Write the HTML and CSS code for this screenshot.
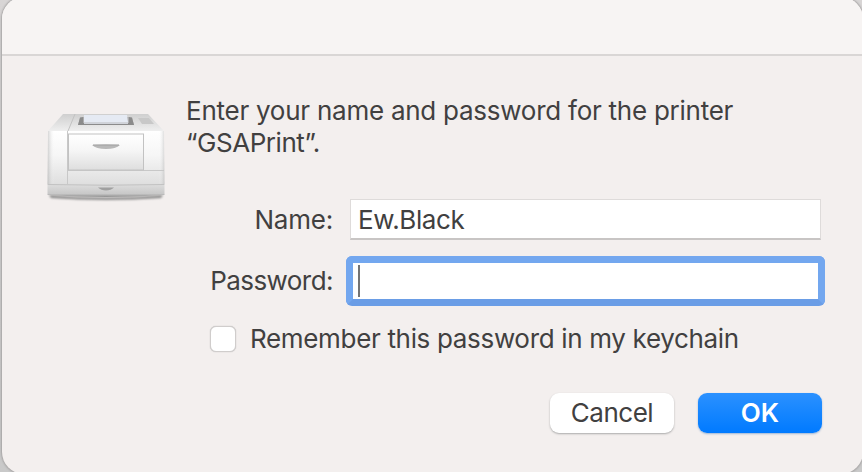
FILE: index.html
```html
<!DOCTYPE html>
<html lang="en">
<head>
<meta charset="utf-8">
<title>Printer sign in</title>
<link rel="stylesheet" href="styles.css">
</head>
<body>
<main class="dialog">
  <header class="titlebar"></header>
  <form class="content">
    <svg class="printer" viewBox="0 0 120 94" aria-hidden="true">
      <defs>
        <linearGradient id="top" x1="0" y1="0" x2="0" y2="1"><stop offset="0" stop-color="#cfcfcf"/><stop offset="1" stop-color="#efefef"/></linearGradient>
        <linearGradient id="front" x1="0" y1="0" x2="0" y2="1"><stop offset="0" stop-color="#fff"/><stop offset=".45" stop-color="#f6f6f6"/><stop offset="1" stop-color="#dedede"/></linearGradient>
        <linearGradient id="side" x1="0" y1="0" x2="1" y2="0"><stop offset="0" stop-color="#aaa" stop-opacity=".55"/><stop offset=".06" stop-color="#fff" stop-opacity="0"/><stop offset=".95" stop-color="#fff" stop-opacity="0"/><stop offset="1" stop-color="#aaa" stop-opacity=".45"/></linearGradient>
        <linearGradient id="base" x1="0" y1="0" x2="0" y2="1"><stop offset="0" stop-color="#dedede"/><stop offset=".75" stop-color="#c8c8c8"/><stop offset="1" stop-color="#8f8f8f"/></linearGradient>
        <filter id="soft" x="-10%" y="-100%" width="120%" height="300%"><feGaussianBlur stdDeviation="1"/></filter>
      </defs>
      <path d="M3 83Q60 88 117 83L115 86Q60 90 5 86Z" fill="#888" filter="url(#soft)"/>
      <path d="M17 2H102L118 19H2Z" fill="url(#top)"/>
      <path d="M29 2L22 19" stroke="#c2c2c2" stroke-width="1"/>
      <path d="M34 5H86L88 13H32Z" fill="#adadae"/>
      <path d="M34 6L37 5V11H83V5L86 6L88 13H32Z" fill="#8b8b8b"/>
      <path d="M38 3H81L82 10H38Z" fill="#e5eaf3"/>
      <path d="M38 10H82V12H38Z" fill="#d0d3d9"/>
      <path d="M92 6H103L108 12H96Z" fill="#c8c8c8"/>
      <path d="M2 19H118L118.500 73H1.500Z" fill="url(#front)"/>
      <path d="M2 19H118L118.500 73H1.500Z" fill="url(#side)"/>
      <path d="M21.500 19V73M21.500 58.500H118" fill="none" stroke="#c8c8c8"/>
      <rect x="22.500" y="22" width="75" height="36" fill="url(#front)" stroke="#c2c2c2"/>
      <path d="M46 33Q60 32 74 33Q70 37 60 37Q50 37 46 33Z" fill="#b8b8b8"/>
      <path d="M47 33H73" stroke="#a0a0a0"/>
      <path d="M1.500 72H118.500V83Q60 87 1.500 83Z" fill="url(#base)"/>
      <path d="M2 72.500Q60 74 118 72.500" stroke="#c2c2c2" fill="none"/>
      <path d="M52 75.500H68Q65 78.500 60 78.500Q55 78.500 52 75.500Z" fill="#a0a0a0"/>
    </svg>
    <div class="fields">
      <p class="message"><span class="lead">Enter your name and password for the printer</span><br>“GSAPrint”.</p>
      <div class="row name-row"><label for="name">Name:</label><div class="field" id="name">Ew.Black</div></div>
      <div class="row password-row"><label class="password-label">Password:</label><div class="field focused"><i class="caret"></i></div></div>
      <div class="remember"><span class="checkbox"></span><span class="remember-text">Remember this password in my keychain</span></div>
      <div class="actions"><button type="button" class="cancel">Cancel</button><button type="button" class="ok">OK</button></div>
    </div>
  </form>
</main>
</body>
</html>
```
FILE: styles.css
```css
* { box-sizing: border-box; }
body {
  margin: 0;
  width: 862px;
  height: 472px;
  overflow: hidden;
  background: linear-gradient(#d8d5d5, #c9c9c9);
  color: #414040;
  font: 26px/32px Inter, sans-serif;
}
.dialog {
  width: 861px;
  height: 477px;
  margin: -3px 0 0 2px;
  border-radius: 22px;
  background: #f3efee;
  box-shadow: 0 0 2px 1px #a5a3a3;
  overflow: hidden;
}
.titlebar { height: 59px; background: #f7f4f3; border-bottom: 2px solid #d9d6d5; }
.content { display: flex; padding: 39px 39px 0 44px; }
.printer { flex: none; width: 120px; height: 94px; margin-top: 17px; }
.fields { width: 640px; margin-left: 20px; flex: none; }
.message { margin: 0; white-space: nowrap; letter-spacing: -.45px; }
.lead { letter-spacing: -.25px; }
.row { display: flex; align-items: center; }
.row label { flex: none; width: 147px; text-align: right; white-space: nowrap; letter-spacing: -.2px; }
.row .password-label { letter-spacing: -.55px; }
.field { flex: none; width: 471px; height: 41px; margin-left: 17px; padding: 4px 7px; background: #fff; border: 1px solid #dedbda; border-bottom: 2px solid #c8c5c4; letter-spacing: -.4px; }
.name-row { margin-top: 40px; }
.password-row { margin-top: 16px; }
.focused { width: 479px; height: 50px; margin-left: 13px; padding: 2px 5px; border: 7px solid #73a7ef; border-bottom-color: #6a9de6; border-radius: 6px; }
.caret { display: block; width: 2px; height: 32px; background: #747474; }
.remember { display: flex; align-items: center; height: 32px; margin: 17px 0 0 24px; white-space: nowrap; letter-spacing: -.33px; }
.checkbox { width: 26px; height: 26px; margin-right: 14px; background: #fff; border: 1px solid #d0cdcc; border-radius: 6px; box-shadow: 0 0 1px #aaa; }
.actions { display: flex; justify-content: flex-end; gap: 24px; width: 636px; margin-top: 38px; }
button { height: 40px; padding: 0; border: 0; border-radius: 9px; font: 26px/38px Inter, sans-serif; color: #414040; }
.cancel { width: 124px; background: #fff; box-shadow: 0 1px 2px #aaa; letter-spacing: -.5px; }
.ok { width: 124px; color: #fff; font-weight: 600; background: linear-gradient(#2b91ff, #007aff); box-shadow: 0 1px 2px #9bb5d5; }
```
